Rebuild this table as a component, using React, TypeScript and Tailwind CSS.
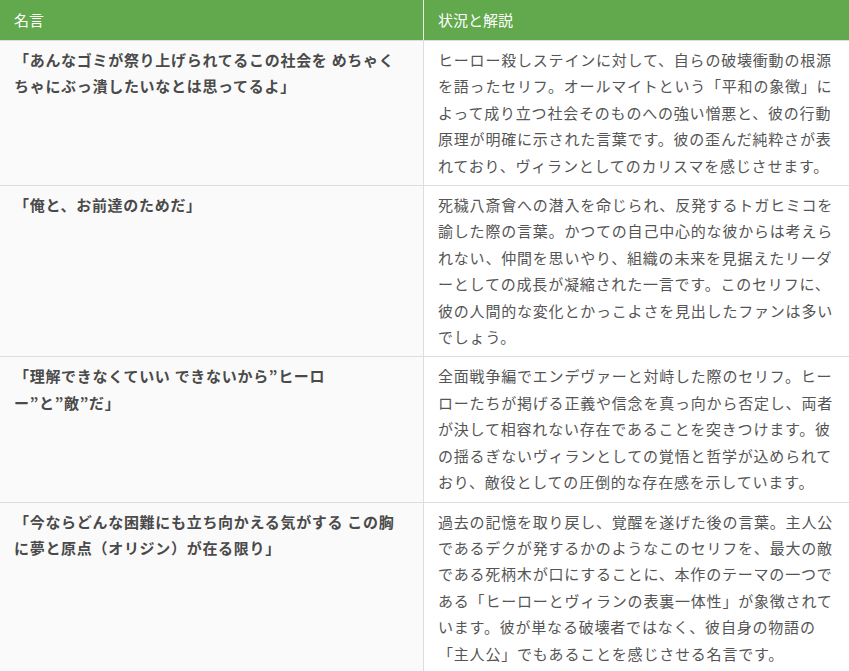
const rows = [
  {
    quote: '「あんなゴミが祭り上げられてるこの社会を めちゃくちゃにぶっ潰したいなとは思ってるよ」',
    note: 'ヒーロー殺しステインに対して、自らの破壊衝動の根源を語ったセリフ。オールマイトという「平和の象徴」によって成り立つ社会そのものへの強い憎悪と、彼の行動原理が明確に示された言葉です。彼の歪んだ純粋さが表れており、ヴィランとしてのカリスマを感じさせます。',
  },
  {
    quote: '「俺と、お前達のためだ」',
    note: '死穢八斎會への潜入を命じられ、反発するトガヒミコを諭した際の言葉。かつての自己中心的な彼からは考えられない、仲間を思いやり、組織の未来を見据えたリーダーとしての成長が凝縮された一言です。このセリフに、彼の人間的な変化とかっこよさを見出したファンは多いでしょう。',
  },
  {
    quote: '「理解できなくていい できないから”ヒーロー”と”敵”だ」',
    note: '全面戦争編でエンデヴァーと対峙した際のセリフ。ヒーローたちが掲げる正義や信念を真っ向から否定し、両者が決して相容れない存在であることを突きつけます。彼の揺るぎないヴィランとしての覚悟と哲学が込められており、敵役としての圧倒的な存在感を示しています。',
  },
  {
    quote: '「今ならどんな困難にも立ち向かえる気がする この胸に夢と原点（オリジン）が在る限り」',
    note: '過去の記憶を取り戻し、覚醒を遂げた後の言葉。主人公であるデクが発するかのようなこのセリフを、最大の敵である死柄木が口にすることに、本作のテーマの一つである「ヒーローとヴィランの表裏一体性」が象徴されています。彼が単なる破壊者ではなく、彼自身の物語の「主人公」でもあることを感じさせる名言です。',
  },
];

export default function App() {
  return (
    <div
      className="w-[849px] bg-white"
      style={{ fontFamily: '"Noto Sans CJK JP", "Noto Sans", sans-serif' }}
    >
      <div className="grid grid-cols-[424px_425px] h-[40px] bg-[#62a84c] text-white text-[15px]">
        <div className="flex items-center px-[14px] border-r border-[#e8f2e4]">名言</div>
        <div className="flex items-center px-[14px]">状況と解説</div>
      </div>
      {rows.map((r, i) => (
        <div key={i} className="grid grid-cols-[424px_425px] border-t border-[#dddddd]">
          <div className="bg-[#fafafa] px-[14px] py-[6px] border-r border-[#dddddd] text-[15px] leading-[26.4px] font-bold text-[#4a4a4a] tracking-[0.7px]">
            {r.quote}
          </div>
          <div className="bg-white px-[14px] py-[6px] text-[15px] leading-[26.4px] text-[#555555] tracking-[0.8px]">
            {r.note}
          </div>
        </div>
      ))}
    </div>
  );
}
